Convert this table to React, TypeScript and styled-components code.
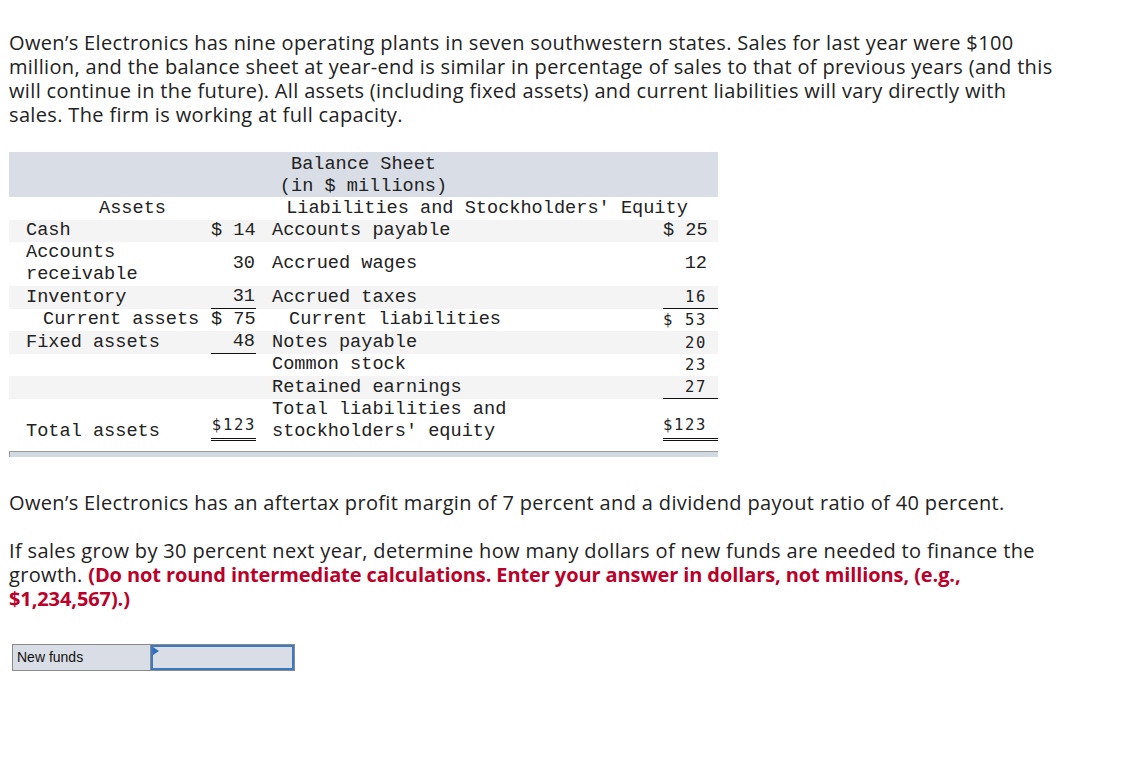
import React from "react";
import styled, { createGlobalStyle } from "styled-components";

const Global = createGlobalStyle`
  html, body { margin: 0; padding: 0; background: #fff; }
  body { font-family: "Open Sans", Lato, sans-serif; color: #222; }
`;

const Page = styled.div`
  padding: 31px 0 40px 9px;
`;

const Para = styled.p<{ $top?: number }>`
  margin: ${(p) => p.$top ?? 0}px 0 0;
  width: 1100px;
  font-size: 20px;
  letter-spacing: 0.35px;
  line-height: 24px;
  color: #222;
  white-space: nowrap;
`;

const Hint = styled.strong`
  color: #bb0029;
  font-weight: 700;
  letter-spacing: -0.1px;
`;

const TableWrap = styled.div`
  margin-top: 25px;
  width: 709px;
`;

const Table = styled.table`
  border-collapse: collapse;
  table-layout: fixed;
  width: 709px;
  font-family: "Liberation Mono", "Courier New", monospace;
  font-size: 18.6px;
  line-height: 22px;
  color: #222;
  td, th { padding: 0; font-weight: 400; }
`;

const Col = styled.col<{ $w: number }>`
  width: ${(p) => p.$w}px;
`;

const HeadRow = styled.tr`
  background: #d9dde6;
`;

const Title = styled.th`
  text-align: center;
  white-space: pre;
  line-height: 21.5px;
  padding-top: 2px !important;
`;

const SubHead = styled.th`
  text-align: center;
  white-space: nowrap;
  line-height: 22px;
  padding-top: 1px !important;
`;

const Row = styled.tr<{ $shade?: boolean; $bottom?: boolean }>`
  background: ${(p) => (p.$shade ? "#f4f4f4" : "#fff")};
  td { vertical-align: ${(p) => (p.$bottom ? "bottom" : "middle")}; }
`;

const Label = styled.td<{ $indent?: boolean; $pad: number }>`
  padding-left: ${(p) => p.$pad + (p.$indent ? 17 : 0)}px !important;
  text-align: left;
  white-space: pre;
`;

const Amount = styled.td<{ $left: number }>`
  padding-left: ${(p) => p.$left}px !important;
`;

const Value = styled.div<{ $rule?: "single" | "double"; $sans?: boolean; $inset?: number }>`
  text-align: right;
  white-space: pre;
  line-height: 22px;
  padding-right: ${(p) => p.$inset ?? 0}px;
  font-family: ${(p) => (p.$sans ? '"DejaVu Sans Mono", monospace' : '"Liberation Mono", monospace')};
  font-size: ${(p) => (p.$sans ? "15.5px" : "18.6px")};
  letter-spacing: ${(p) => (p.$sans ? "1.7px" : "0")};
  border-bottom: ${(p) =>
    p.$rule === "single" ? "1px solid #111" : p.$rule === "double" ? "3px double #111" : "none"};
  padding-bottom: ${(p) => (p.$rule === "double" ? "2px" : "0")};
  margin-bottom: ${(p) => (p.$rule === "double" ? "2px" : "0")};
`;

const BottomBar = styled.div`
  height: 5px;
  margin-top: 8px;
  background: #d3d9e3;
  border-top: 1px solid #9a9a9a;
  border-left: 1px solid #9a9a9a;
`;

const Answer = styled.div`
  margin: 33px 0 0 3px;
  display: flex;
  width: 283px;
  height: 27px;
  border: 1px solid #8a8a8a;
  box-sizing: border-box;
  background: #d9dde6;
`;

const AnswerLabel = styled.div`
  width: 138px;
  box-sizing: border-box;
  border-right: 1px solid #8a8a8a;
  padding-left: 4px;
  font-family: "Liberation Sans", Arial, sans-serif;
  font-size: 14px;
  line-height: 25px;
  color: #111;
`;

const AnswerInput = styled.div`
  position: relative;
  flex: 1;
  border: 2px solid #3c79c0;
  background: #d9dde6;
`;

const Marker = styled.span`
  position: absolute;
  left: 0;
  top: 0;
  width: 0;
  height: 0;
  border-left: 6px solid #2f6fc0;
  border-top: 4px solid transparent;
  border-bottom: 4px solid transparent;
`;

type Side = { label: string; value: string; rule?: "single" | "double"; sans?: boolean; indent?: boolean };

const rows: { left?: Side; right: Side; bottom?: boolean }[] = [
  { left: { label: "Cash", value: "$ 14" }, right: { label: "Accounts payable", value: "$ 25" } },
  { left: { label: "Accounts\nreceivable", value: "30" }, right: { label: "Accrued wages", value: "12" } },
  { left: { label: "Inventory", value: "31", rule: "single" }, right: { label: "Accrued taxes", value: "16", rule: "single", sans: true } },
  { left: { label: "Current assets", value: "$ 75", indent: true }, right: { label: "Current liabilities", value: "$ 53", sans: true, indent: true } },
  { left: { label: "Fixed assets", value: "48", rule: "single" }, right: { label: "Notes payable", value: "20", sans: true } },
  { right: { label: "Common stock", value: "23", sans: true } },
  { right: { label: "Retained earnings", value: "27", rule: "single", sans: true } },
  {
    left: { label: "Total assets", value: "$123", rule: "double", sans: true },
    right: { label: "Total liabilities and\nstockholders' equity", value: "$123", rule: "double", sans: true },
    bottom: true,
  },
];

export default function App() {
  return (
    <>
      <Global />
      <Page>
        <Para>
          Owen’s Electronics has nine operating plants in seven southwestern states. Sales for last year were $100
          <br />
          million, and the balance sheet at year-end is similar in percentage of sales to that of previous years (and this
          <br />
          will continue in the future). All assets (including fixed assets) and current liabilities will vary directly with
          <br />
          sales. The firm is working at full capacity.
        </Para>
        <TableWrap>
          <Table>
            <colgroup>
              <Col $w={196} />
              <Col $w={51} />
              <Col $w={407} />
              <Col $w={55} />
            </colgroup>
            <thead>
              <HeadRow>
                <Title colSpan={4}>{"Balance Sheet\n(in $ millions)"}</Title>
              </HeadRow>
              <tr>
                <SubHead colSpan={2}>Assets</SubHead>
                <SubHead colSpan={2}>Liabilities and Stockholders' Equity</SubHead>
              </tr>
            </thead>
            <tbody>
              {rows.map((r, i) => (
                <Row key={i} $shade={i % 2 === 0} $bottom={r.bottom}>
                  <Label $pad={17} $indent={r.left?.indent}>
                    {r.left?.label ?? ""}
                  </Label>
                  <Amount $left={6}>
                    {r.left ? (
                      <Value $rule={r.left.rule} $sans={r.left.sans} $inset={r.left.sans ? 0 : 1}>
                        {r.left.value}
                      </Value>
                    ) : null}
                  </Amount>
                  <Label $pad={16} $indent={r.right.indent}>
                    {r.right.label}
                  </Label>
                  <Amount $left={0}>
                    <Value $rule={r.right.rule} $sans={r.right.sans} $inset={11}>
                      {r.right.value}
                    </Value>
                  </Amount>
                </Row>
              ))}
            </tbody>
          </Table>
          <BottomBar />
        </TableWrap>
        <Para $top={34}>
          Owen’s Electronics has an aftertax profit margin of 7 percent and a dividend payout ratio of 40 percent.
        </Para>
        <Para $top={24}>
          If sales grow by 30 percent next year, determine how many dollars of new funds are needed to finance the
          <br />
          growth.{" "}
          <Hint>
            (Do not round intermediate calculations. Enter your answer in dollars, not millions, (e.g.,
            <br />
            $1,234,567).)
          </Hint>
        </Para>
        <Answer>
          <AnswerLabel>New funds</AnswerLabel>
          <AnswerInput>
            <Marker />
          </AnswerInput>
        </Answer>
      </Page>
    </>
  );
}
